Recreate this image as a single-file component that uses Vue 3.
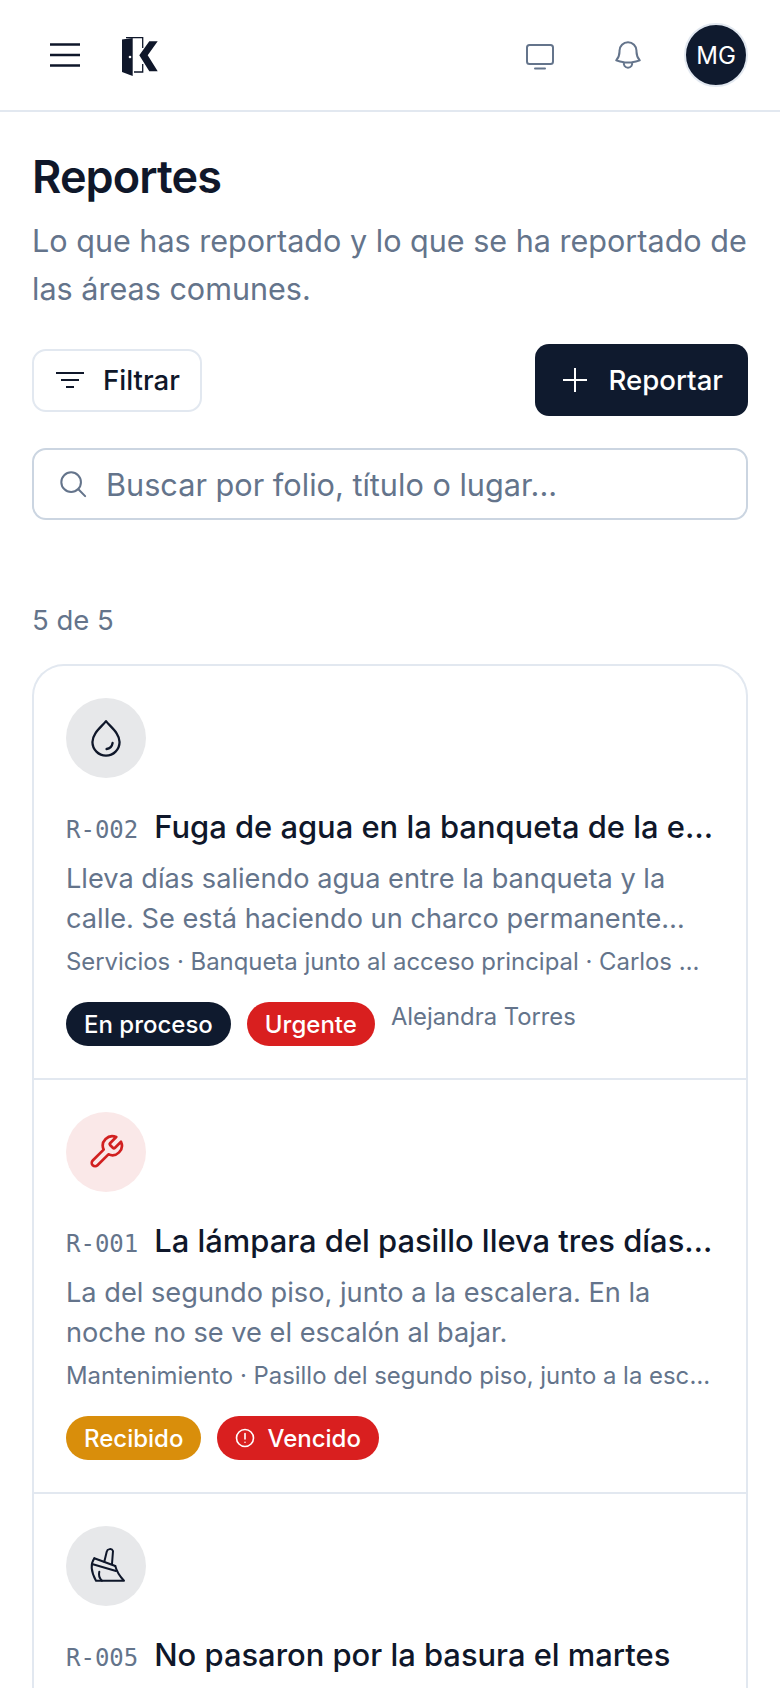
<template>
  <div class="page">
    <header class="topbar">
      <button class="icon-btn menu" aria-label="Menú">
        <svg width="32" height="26" viewBox="0 0 32 26" fill="none" stroke="#0f172a" stroke-width="2.6">
          <path d="M1 2.5h30M1 13h30M1 23.5h30" />
        </svg>
      </button>
      <svg class="logo" width="38" height="42" viewBox="0 0 38 42">
        <path d="M4 3.700H20.700V14M20.700 30V38H12" fill="none" stroke="#0f172a" stroke-width="1.300" />
        <path d="M0 5.500L10.700 4V42L0 38z" fill="#0f172a" />
        <circle cx="8" cy="23" r="1.300" fill="#fff" />
        <path d="M17.300 21.300L27.300 7.300H35.700L25.700 21.300L35.700 37.300H27.300z" fill="#0f172a" />
      </svg>
      <div class="spacer"></div>
      <svg class="top-icon" width="34" height="34" viewBox="0 0 34 34" fill="none" stroke="#64748b" stroke-width="2">
        <rect x="4" y="7" width="26" height="19" rx="2.500" />
        <path d="M12 30.500h10" stroke-linecap="round" />
      </svg>
      <svg class="top-icon bell" width="34" height="34" viewBox="0 0 24 24" fill="none" stroke="#64748b" stroke-width="1.450" stroke-linecap="round" stroke-linejoin="round">
        <path d="M14.857 17.082a23.848 23.848 0 0 0 5.454-1.310A8.967 8.967 0 0 1 18 9.750V9A6 6 0 0 0 6 9v.750a8.967 8.967 0 0 1-2.312 6.022c1.733.640 3.560 1.085 5.455 1.310m5.714 0a24.255 24.255 0 0 1-5.714 0m5.714 0a3 3 0 1 1-5.714 0" />
      </svg>
      <div class="avatar">MG</div>
    </header>

    <main class="content">
      <h1>Reportes</h1>
      <p class="lead">Lo que has reportado y lo que se ha reportado de las áreas comunes.</p>

      <div class="actions">
        <button class="btn-filter">
          <svg width="28" height="18" viewBox="0 0 28 18" fill="none" stroke="#0f172a" stroke-width="2">
            <path d="M0 2h28M5 9h18M10 16h8" />
          </svg>
          Filtrar
        </button>
        <button class="btn-report">
          <svg width="24" height="24" viewBox="0 0 24 24" fill="none" stroke="#fff" stroke-width="2">
            <path d="M12 0v24M0 12h24" />
          </svg>
          Reportar
        </button>
      </div>

      <label class="search">
        <svg width="28" height="28" viewBox="0 0 30 30" fill="none" stroke="#64748b" stroke-width="2.200" stroke-linecap="round">
          <circle cx="13" cy="13" r="10.500" />
          <path d="M21 21l7 7" />
        </svg>
        <input type="text" placeholder="Buscar por folio, título o lugar..." />
      </label>

      <p class="count">5 de 5</p>

      <section class="list">
        <article v-for="r in reports" :key="r.folio" class="row">
          <div class="circle" :class="{ danger: r.icon === 'wrench' }">
            <svg v-if="r.icon === 'drop'" width="44" height="44" viewBox="0 0 24 24" fill="none" stroke="#0f172a" stroke-width="1.250" stroke-linecap="round" stroke-linejoin="round">
              <path d="M12 2.800c2.600 3.300 7.400 6.600 7.400 11.400a7.400 7.400 0 0 1-14.800 0C4.600 9.400 9.400 6.100 12 2.800z" />
              <path d="M12.300 18c1.700-.2 3-1.500 3.300-3.300" />
            </svg>
            <svg v-else-if="r.icon === 'wrench'" width="38" height="38" viewBox="0 0 24 24" fill="none" stroke="#d12020" stroke-width="1.700" stroke-linecap="round" stroke-linejoin="round">
              <path d="M14.700 6.300a1 1 0 0 0 0 1.400l1.600 1.600a1 1 0 0 0 1.400 0l3.770-3.770a6 6 0 0 1-7.940 7.940l-6.910 6.910a2.120 2.120 0 0 1-3-3l6.910-6.910a6 6 0 0 1 7.940-7.940l-3.760 3.760z" />
            </svg>
            <svg v-else width="40" height="40" viewBox="0 0 40 40" fill="none" stroke="#0f172a" stroke-width="2" stroke-linecap="round" stroke-linejoin="round">
              <path d="M18.300 15.700L20.700 5.700C21.300 3 25.800 1.800 27 5L26 18" />
              <path d="M8.300 12.300L29.300 20" />
              <path d="M6 18L30 25" />
              <path d="M8.300 12.300C5 17 4 24 10 34.700H38C34 30.500 31 27 29.300 20" />
              <path d="M13.300 25.700C12.500 29 13.500 32.500 16 34.700" />
            </svg>
          </div>
          <div class="title-line">
            <span class="folio">{{ r.folio }}</span>
            <span class="title">{{ r.title }}</span>
          </div>
          <p v-if="r.text" class="desc">{{ r.text }}</p>
          <p v-if="r.meta" class="meta">{{ r.meta }}</p>
          <div v-if="r.tags" class="tags">
            <span v-for="t in r.tags" :key="t.label" class="badge" :class="t.kind">
              <svg v-if="t.alert" width="20" height="20" viewBox="0 0 20 20" fill="none" stroke="#fff" stroke-width="1.600" stroke-linecap="round">
                <circle cx="10" cy="10" r="8.500" />
                <path d="M10 5.500v5.500M10 14.200v.1" />
              </svg>
              {{ t.label }}
            </span>
            <span v-if="r.person" class="person">{{ r.person }}</span>
          </div>
        </article>
      </section>
    </main>
  </div>
</template>

<script setup>
const reports = [
  {
    folio: 'R-002',
    icon: 'drop',
    title: 'Fuga de agua en la banqueta de la entrada principal',
    text: 'Lleva días saliendo agua entre la banqueta y la calle. Se está haciendo un charco permanente que ya empieza a afectar el paso.',
    meta: 'Servicios · Banqueta junto al acceso principal · Carlos Méndez',
    tags: [
      { label: 'En proceso', kind: 'navy' },
      { label: 'Urgente', kind: 'red' },
    ],
    person: 'Alejandra Torres',
  },
  {
    folio: 'R-001',
    icon: 'wrench',
    title: 'La lámpara del pasillo lleva tres días fundida',
    text: 'La del segundo piso, junto a la escalera. En la noche no se ve el escalón al bajar.',
    meta: 'Mantenimiento · Pasillo del segundo piso, junto a la escalera',
    tags: [
      { label: 'Recibido', kind: 'amber' },
      { label: 'Vencido', kind: 'red', alert: true },
    ],
  },
  {
    folio: 'R-005',
    icon: 'broom',
    title: 'No pasaron por la basura el martes',
  },
]
</script>

<style>
html,
body {
  margin: 0;
  background: #fff;
}
</style>

<style scoped>
.page {
  width: 780px;
  height: 1688px;
  overflow: hidden;
  background: #fff;
  color: #0f172a;
  font-family: Inter, "Liberation Sans", sans-serif;
}

.topbar {
  display: flex;
  align-items: center;
  height: 110px;
  padding: 0 32px 0 49px;
  border-bottom: 2px solid #e2e8f0;
}

.icon-btn {
  display: flex;
  padding: 0;
  border: 0;
  background: none;
}

.logo {
  margin-left: 41px;
}

.spacer {
  flex: 1;
}

.top-icon {
  margin-right: 54px;
}

.bell {
  margin-right: 39px;
}

.avatar {
  display: flex;
  align-items: center;
  justify-content: center;
  box-sizing: border-box;
  width: 64px;
  height: 64px;
  border: 2px solid #e2e8f0;
  border-radius: 50%;
  background: #0f1a2e;
  color: #fff;
  font-size: 24px;
}

.content {
  padding: 38px 32px 0;
}

h1 {
  margin: 0;
  font-size: 45px;
  line-height: 54px;
  font-weight: 600;
  letter-spacing: -0.9px;
}

.lead {
  margin: 13px 0 0;
  color: #64748b;
  font-size: 30.550px;
  line-height: 48px;
}

.actions {
  display: flex;
  align-items: center;
  justify-content: space-between;
  margin-top: 31px;
}

.btn-filter,
.btn-report {
  display: flex;
  align-items: center;
  font-family: inherit;
  font-size: 27.600px;
  font-weight: 450;
}

.btn-filter {
  gap: 19px;
  height: 63px;
  padding: 0 20px 0 22px;
  border: 2px solid #e2e8f0;
  border-radius: 14px;
  background: #fff;
  color: #0f172a;
}

.btn-report {
  gap: 22px;
  height: 72px;
  padding: 0 25px 0 28px;
  border: 0;
  border-radius: 14px;
  background: #0f1a2e;
  color: #fff;
}

.search {
  display: flex;
  align-items: center;
  gap: 19px;
  height: 72px;
  margin-top: 32px;
  padding: 0 25px;
  box-sizing: border-box;
  border: 2px solid #cbd5e1;
  border-radius: 14px;
}

.search input {
  flex: 1;
  min-width: 0;
  padding: 0;
  border: 0;
  outline: 0;
  background: none;
  font-family: inherit;
  font-size: 30.660px;
  color: #0f172a;
}

.search input::placeholder {
  color: #64748b;
  opacity: 1;
}

.count {
  margin: 82px 0 0;
  color: #64748b;
  font-size: 27.500px;
  line-height: 36px;
}

.list {
  margin-top: 26px;
  border: 2px solid #e2e8f0;
  border-bottom: 0;
  border-radius: 32px 32px 0 0;
}

.row {
  padding: 32px;
  border-bottom: 2px solid #e2e8f0;
}

.circle {
  display: flex;
  align-items: center;
  justify-content: center;
  width: 80px;
  height: 80px;
  border-radius: 50%;
  background: #e7e8ea;
}

.circle.danger {
  background: #fae8e8;
}

.title-line {
  display: flex;
  align-items: baseline;
  gap: 16px;
  margin-top: 27px;
}

.folio {
  flex: none;
  color: #64748b;
  font-family: "DejaVu Sans Mono", monospace;
  font-size: 24px;
}

.title {
  overflow: hidden;
  white-space: nowrap;
  text-overflow: ellipsis;
  font-size: 30.900px;
  line-height: 44px;
  font-weight: 450;
}

.desc {
  display: -webkit-box;
  overflow: hidden;
  margin: 10px 0 0;
  -webkit-box-orient: vertical;
  -webkit-line-clamp: 2;
  color: #64748b;
  font-size: 27.200px;
  line-height: 40px;
}

.meta {
  overflow: hidden;
  margin: 5px 0 0;
  white-space: nowrap;
  text-overflow: ellipsis;
  color: #64748b;
  font-size: 23.900px;
  line-height: 36px;
}

.tags {
  display: flex;
  align-items: flex-start;
  gap: 16px;
  margin-top: 22px;
}

.badge {
  display: flex;
  align-items: center;
  gap: 12px;
  height: 44px;
  padding: 0 18px;
  border-radius: 22px;
  color: #fff;
  font-size: 24px;
  font-weight: 450;
}

.navy {
  background: #0f1a2e;
}

.red {
  background: #d91f1f;
}

.amber {
  background: #d98e0b;
}

.person {
  color: #64748b;
  font-size: 23.800px;
  line-height: 30px;
}
</style>
